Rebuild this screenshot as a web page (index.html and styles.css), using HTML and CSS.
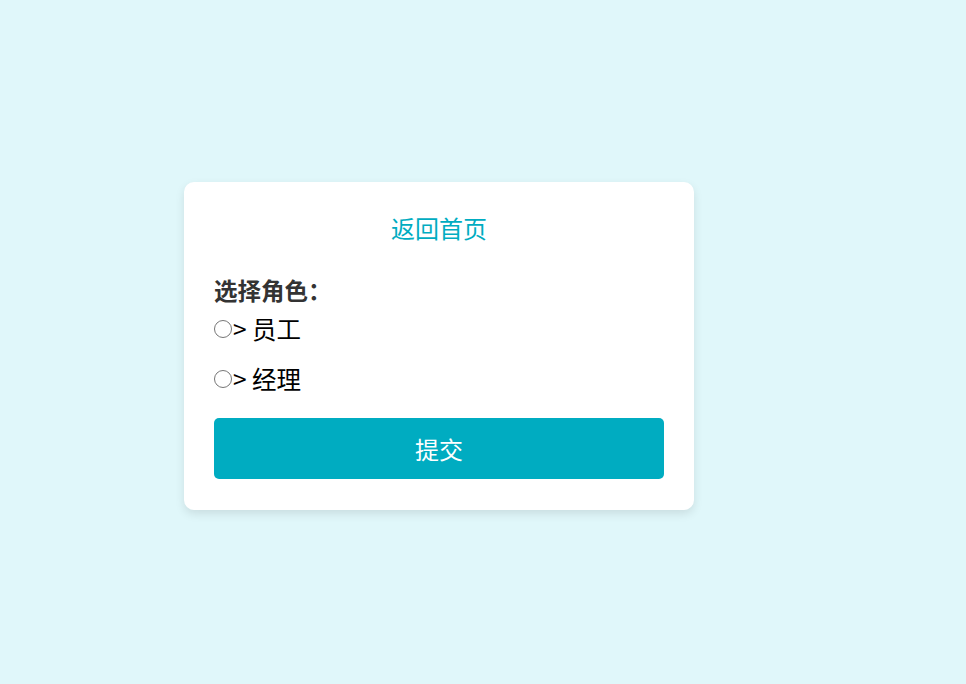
FILE: index.html
```html
<!DOCTYPE html>
<html lang="zh-CN">
<head>
<meta charset="utf-8">
<title>选择角色</title>
<link rel="stylesheet" href="styles.css">
</head>
<body>
<div class="card">
  <a class="home-link" href="#">返回首页</a>
  <form class="role-form">
    <div class="form-label">选择角色：</div>
    <label class="option"><input type="radio" name="role" class="radio">&gt; 员工</label>
    <label class="option"><input type="radio" name="role" class="radio">&gt; 经理</label>
    <button type="button" class="submit">提交</button>
  </form>
</div>
</body>
</html>
```

FILE: styles.css
```css
html, body {
  margin: 0;
  padding: 0;
}
body {
  background: #e0f7fa;
  min-height: 684px;
  font-family: "Noto Sans CJK SC", "Noto Sans", sans-serif;
  padding: 182px 0 0 184px;
  box-sizing: border-box;
}
.card {
  width: 510px;
  box-sizing: border-box;
  background: #fff;
  border-radius: 10px;
  padding: 30px 30px 31px;
  box-shadow: 0 4px 10px rgba(0, 0, 0, 0.1);
  display: flex;
  flex-direction: column;
}
.home-link {
  display: block;
  text-align: center;
  color: #00acc1;
  text-decoration: none;
  font-size: 24px;
  line-height: 32px;
}
.role-form {
  display: flex;
  flex-direction: column;
  margin-top: 31px;
}
.form-label {
  font-weight: bold;
  font-size: 23.5px;
  color: #333;
  line-height: 30px;
}
.option {
  display: flex;
  align-items: center;
  font-size: 24.5px;
  color: #000;
  line-height: 30px;
  margin-top: 9px;
}
.option + .option {
  margin-top: 20px;
}
.radio {
  width: 18px;
  height: 18px;
  margin: 0 1px 0 0;
}
.submit {
  margin-top: 24px;
  height: 61px;
  border: none;
  border-radius: 5px;
  background: #00acc1;
  color: #fff;
  font-family: inherit;
  font-size: 24px;
}
```
